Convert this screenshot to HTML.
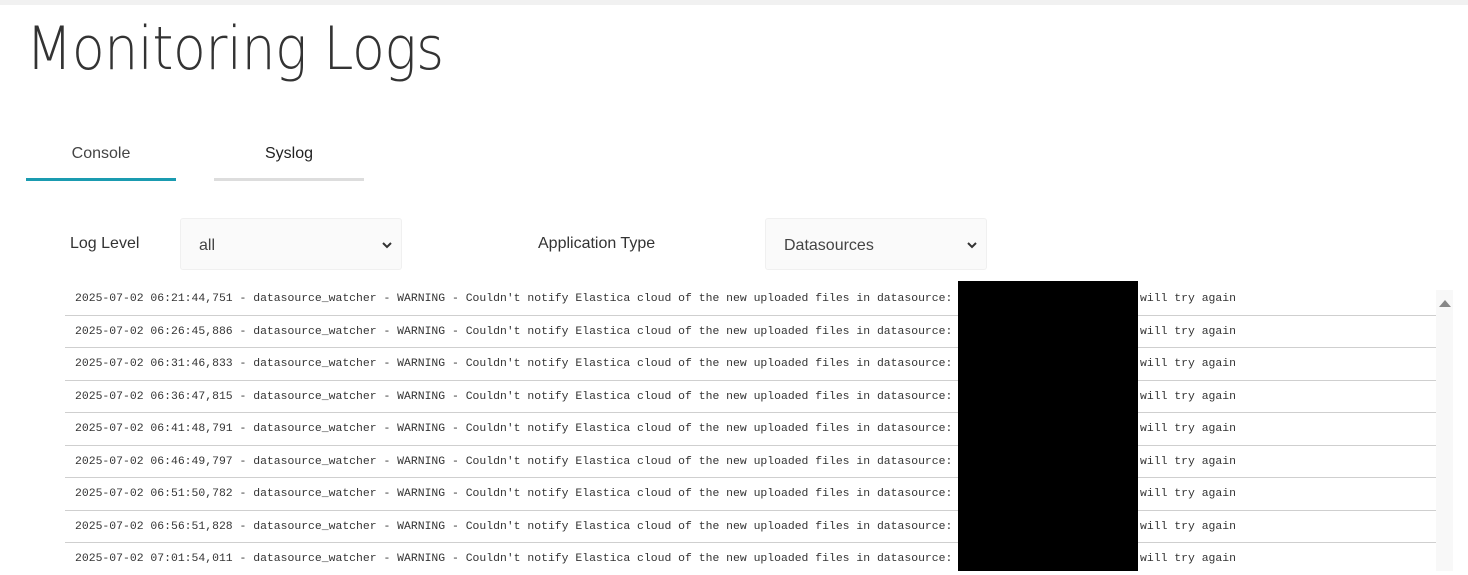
<!DOCTYPE html>
<html><head><meta charset="utf-8"><style>
body{margin:0;width:1468px;height:571px;overflow:hidden;background:#fff;font-family:"Liberation Sans",sans-serif;position:relative}
.a{position:absolute}
.topbar{left:0;top:0;width:1468px;height:5px;background:#f1f1f1}
h1{position:absolute;left:26px;top:14px;margin:0;font-size:60px;color:#333;letter-spacing:-0.5px;font-family:"DejaVu Sans","Liberation Sans",sans-serif;font-weight:200;transform:scaleX(0.895);transform-origin:left}
.tab{font-size:16px;color:#444;text-align:center;width:150px;top:145px}
.ul{height:3px;top:178px;width:150px}
.lbl{font-size:16px;color:#333;top:235px}
.sel{top:218px;height:52px;width:222px;background:#fafafa;border:1px solid #f0f0f0;box-sizing:border-box;border-radius:3px}
.sel span{position:absolute;left:18px;top:18px;font-size:16px;color:#444}
.sel svg{position:absolute;right:8px;top:21px}
.rows{left:65px;top:283px;width:1371px}
.row{position:relative;height:31.5px;border-bottom:1px solid #cfcfcf;font-family:"Liberation Mono",monospace;font-size:11.43px;color:#333;line-height:31px;padding-left:10px;white-space:pre;box-sizing:content-box}
.row b{position:absolute;left:1075px;top:0;font-weight:normal}
.row:last-child{border-bottom:none}
</style></head><body>
<div class="a topbar"></div>
<h1>Monitoring Logs</h1>
<div class="a tab" style="left:26px">Console</div>
<div class="a tab" style="left:214px;color:#222">Syslog</div>
<div class="a ul" style="left:26px;background:#1a9bb0"></div>
<div class="a ul" style="left:214px;background:#ddd"></div>
<div class="a lbl" style="left:70px">Log Level</div>
<div class="a sel" style="left:180px"><span>all</span><svg width="12" height="10" viewBox="0 0 12 10"><path d="M2 3l4 4 4-4" stroke="#333" stroke-width="2" fill="none"/></svg></div>
<div class="a lbl" style="left:538px">Application Type</div>
<div class="a sel" style="left:765px"><span>Datasources</span><svg width="12" height="10" viewBox="0 0 12 10"><path d="M2 3l4 4 4-4" stroke="#333" stroke-width="2" fill="none"/></svg></div>
<div class="a" style="left:1436px;top:290px;width:17px;height:281px;background:#f8f8f8"></div>
<svg class="a" style="left:1438px;top:298px" width="14" height="10"><path d="M1 9L7 2 13 9z" fill="#888"/></svg>
<div class="a rows">
<div class="row">2025-07-02 06:21:44,751 - datasource_watcher - WARNING - Couldn't notify Elastica cloud of the new uploaded files in datasource:<b>will try again</b></div>
<div class="row">2025-07-02 06:26:45,886 - datasource_watcher - WARNING - Couldn't notify Elastica cloud of the new uploaded files in datasource:<b>will try again</b></div>
<div class="row">2025-07-02 06:31:46,833 - datasource_watcher - WARNING - Couldn't notify Elastica cloud of the new uploaded files in datasource:<b>will try again</b></div>
<div class="row">2025-07-02 06:36:47,815 - datasource_watcher - WARNING - Couldn't notify Elastica cloud of the new uploaded files in datasource:<b>will try again</b></div>
<div class="row">2025-07-02 06:41:48,791 - datasource_watcher - WARNING - Couldn't notify Elastica cloud of the new uploaded files in datasource:<b>will try again</b></div>
<div class="row">2025-07-02 06:46:49,797 - datasource_watcher - WARNING - Couldn't notify Elastica cloud of the new uploaded files in datasource:<b>will try again</b></div>
<div class="row">2025-07-02 06:51:50,782 - datasource_watcher - WARNING - Couldn't notify Elastica cloud of the new uploaded files in datasource:<b>will try again</b></div>
<div class="row">2025-07-02 06:56:51,828 - datasource_watcher - WARNING - Couldn't notify Elastica cloud of the new uploaded files in datasource:<b>will try again</b></div>
<div class="row">2025-07-02 07:01:54,011 - datasource_watcher - WARNING - Couldn't notify Elastica cloud of the new uploaded files in datasource:<b>will try again</b></div>
</div>
<div class="a" style="left:958px;top:281px;width:180px;height:290px;background:#000"></div>
</body></html>
